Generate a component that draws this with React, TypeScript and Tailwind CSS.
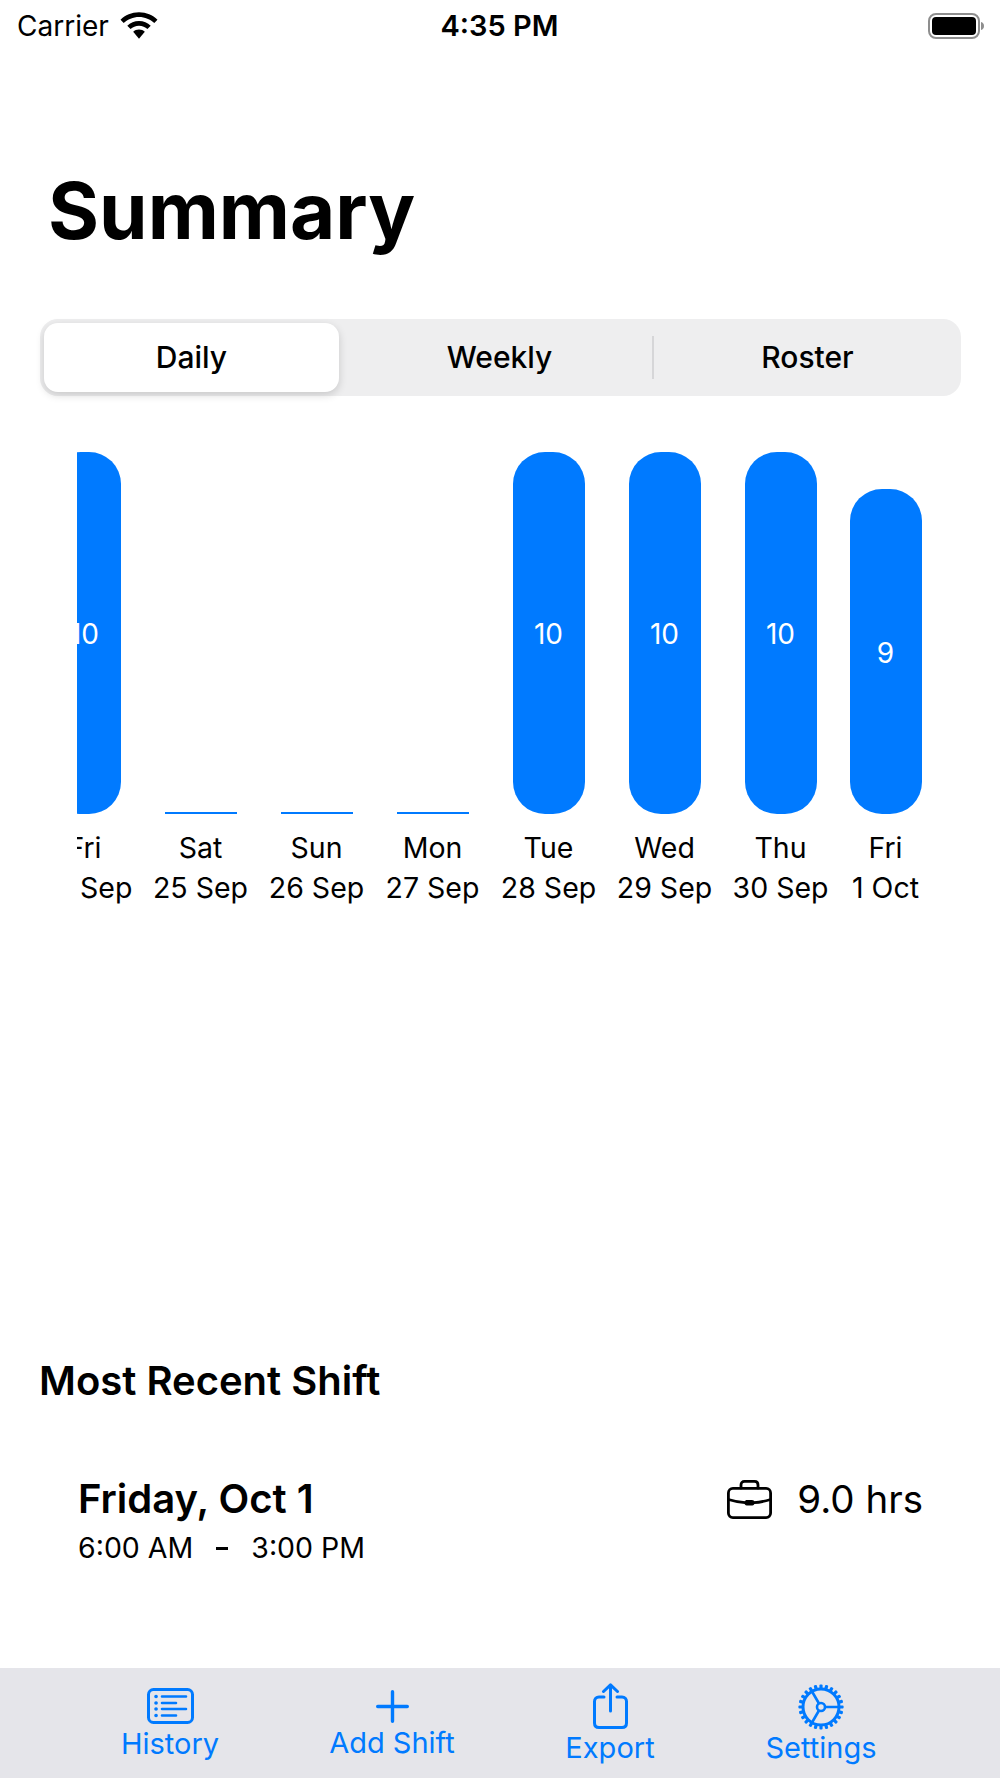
const font = "font-['Inter','Liberation_Sans',sans-serif]";

const days = [
  { day: "Fri", date: "24 Sep", hours: 10 },
  { day: "Sat", date: "25 Sep", hours: 0 },
  { day: "Sun", date: "26 Sep", hours: 0 },
  { day: "Mon", date: "27 Sep", hours: 0 },
  { day: "Tue", date: "28 Sep", hours: 10 },
  { day: "Wed", date: "29 Sep", hours: 10 },
  { day: "Thu", date: "30 Sep", hours: 10 },
  { day: "Fri", date: "1 Oct", hours: 9 },
];

function WifiIcon() {
  return (
    <svg width="38" height="28" viewBox="0 0 36 26" fill="black">
      <path d="M18 0C11 0 5 2.700 0.500 7L3.500 10.200C7.300 6.600 12.400 4.400 18 4.400C23.600 4.400 28.700 6.600 32.500 10.200L35.500 7C31 2.700 25 0 18 0Z" />
      <path d="M18 8.200C13.700 8.200 9.800 9.900 6.900 12.700L10 15.900C12 13.900 14.900 12.700 18 12.700C21.100 12.700 24 13.900 26 15.900L29.100 12.700C26.200 9.900 22.300 8.200 18 8.200Z" />
      <path d="M18 16.300C15.800 16.300 13.900 17.100 12.500 18.500L18 25L23.500 18.500C22.100 17.100 20.200 16.300 18 16.300Z" />
    </svg>
  );
}

function BatteryIcon() {
  return (
    <svg width="56" height="26" viewBox="0 0 56 26">
      <rect x="1" y="1" width="50" height="24" rx="7" fill="none" stroke="#8e8e8e" strokeWidth="2" />
      <rect x="4" y="4" width="44" height="18" rx="4" fill="black" />
      <path d="M53 9C55 9.600 56 11 56 13C56 15 55 16.400 53 17Z" fill="#8e8e8e" />
    </svg>
  );
}

function HistoryIcon() {
  return (
    <svg width="47" height="36" viewBox="0 0 47 36" fill="none" stroke="#007aff" strokeWidth="3" strokeLinecap="round">
      <rect x="1.500" y="1.500" width="44" height="33" rx="5" />
      <path d="M15 8.500H39M15 15H29M15 21H39M15 27.500H29" strokeWidth="2.600" />
      <path d="M9 8.500H9.100M9 15H9.100M9 21H9.100M9 27.500H9.100" strokeWidth="3.600" />
    </svg>
  );
}

function PlusIcon() {
  return (
    <svg width="33" height="33" viewBox="0 0 33 33" fill="none" stroke="#007aff" strokeWidth="3.400" strokeLinecap="round">
      <path d="M16.500 1.700V31.300M1.700 16.500H31.300" />
    </svg>
  );
}

function ShareIcon() {
  return (
    <svg width="35" height="46" viewBox="0 0 35 46" fill="none" stroke="#007aff" strokeWidth="3" strokeLinecap="round" strokeLinejoin="round">
      <path d="M11 14H6C3.200 14 1.500 15.800 1.500 18.600V40C1.500 42.800 3.200 44.500 6 44.500H29C31.800 44.500 33.500 42.800 33.500 40V18.600C33.500 15.800 31.800 14 29 14H24" />
      <path d="M17.500 28V1.800M10.500 8.500L17.500 1.800L24.500 8.500" />
    </svg>
  );
}

function GearIcon() {
  const teeth = Array.from({ length: 24 }, (_, i) => i * 15);
  return (
    <svg width="46" height="46" viewBox="0 0 46 46" fill="none" stroke="#007aff">
      <circle cx="23" cy="23" r="18" strokeWidth="3" />
      {teeth.map((a) => (
        <rect key={a} x="21.400" y="0.400" width="3.200" height="5" rx="1" fill="#007aff" stroke="none" transform={`rotate(${a} 23 23)`} />
      ))}
      <circle cx="23" cy="23" r="4" strokeWidth="2.600" />
      <path d="M27 23H41M21 19.500L14 7.500M21 26.500L14 38.500" strokeWidth="2.600" />
    </svg>
  );
}

function BriefcaseIcon() {
  return (
    <svg width="45" height="39" viewBox="0 0 45 39" fill="none" stroke="black" strokeWidth="2.800" strokeLinecap="round" strokeLinejoin="round">
      <rect x="1.400" y="8.400" width="42.200" height="29.200" rx="4.500" />
      <path d="M14 8V5C14 2.800 15.300 1.400 17.500 1.400H27.500C29.700 1.400 31 2.800 31 5V8" />
      <path d="M1.400 19.500C8 21.500 14 22.500 18 22.700M43.600 19.500C37 21.500 31 22.500 27 22.700" />
      <rect x="18" y="20.500" width="9" height="4.500" rx="1.500" fill="black" strokeWidth="1" />
    </svg>
  );
}

function StatusBar() {
  return (
    <div className="flex h-[50px] items-center pl-[17px] pr-[16px] pt-[2px]">
      <span className="text-[28px] text-black">Carrier</span>
      <span className="ml-[11px]">
        <WifiIcon />
      </span>
      <span className="flex-1 pr-[87px] text-center text-[29px] font-semibold text-black">4:35 PM</span>
      <BatteryIcon />
    </div>
  );
}

function SegmentedControl() {
  return (
    <div className="mx-[40px] mt-[46px] flex h-[77px] w-[921px] items-center rounded-[18px] bg-[#eeeeef] p-[4px] text-[30px] font-medium text-black">
      <div className="flex h-[69px] w-[295px] items-center justify-center rounded-[14px] bg-white shadow-[0_3px_8px_rgba(0,0,0,0.16)]">
        Daily
      </div>
      <div className="flex h-[43px] w-[313px] items-center justify-center pl-[8px]">Weekly</div>
      <div className="h-[43px] w-[2px] bg-[#d6d6d8]" />
      <div className="flex h-[43px] flex-1 items-center justify-center pl-[4px]">Roster</div>
    </div>
  );
}

function Chart() {
  return (
    <div className="ml-[77px] mt-[55px] w-[846px] overflow-hidden">
      <div className="ml-[-40px] flex gap-[21px]">
        {days.map((d, i) => (
          <div key={i} className={`flex shrink-0 flex-col items-center ${i === days.length - 1 ? "w-[73px]" : "w-[95px]"}`}>
            <div className="flex h-[363px] items-end">
              {d.hours === 0 ? (
                <div className="h-[2px] w-[72px] bg-[#007aff]" />
              ) : (
                <div
                  className="flex w-[72px] items-center justify-center rounded-[32px] bg-[#007aff] pt-[2px] text-[28px] text-white"
                  style={{ height: d.hours * 37 - 8 }}
                >
                  {d.hours}
                </div>
              )}
            </div>
            <div className="mt-[14px] whitespace-nowrap text-center text-[28.500px] leading-[40px] text-black">{d.day}</div>
            <div className="whitespace-nowrap text-center text-[28.500px] leading-[40px] text-black">{d.date}</div>
          </div>
        ))}
      </div>
    </div>
  );
}

function RecentShift() {
  return (
    <div className="mt-[449px] pl-[39px]">
      <div className="text-[40px] font-semibold leading-[48px] text-black">Most Recent Shift</div>
      <div className="ml-[39px] mr-[77px] mt-[70px] flex items-center justify-between">
        <div className="text-[40px] font-semibold leading-[48px] text-black">Friday, Oct 1</div>
        <div className="flex items-center gap-[25px] text-[38.500px] leading-[48px] text-black">
          <BriefcaseIcon />
          <span>9.0 hrs</span>
        </div>
      </div>
      <div className="ml-[39px] mt-[7px] flex items-center text-[28.500px] leading-[36px] text-black">
        <span>6:00 AM</span>
        <span className="mx-[23px] h-[3px] w-[12px] bg-black" />
        <span>3:00 PM</span>
      </div>
    </div>
  );
}

function TabBar() {
  return (
    <div className="mt-auto flex h-[110px] bg-[#e5e5ea] pl-[70px] text-[29px] leading-[34px] text-[#007aff]">
      <div className="flex h-[110px] w-[200px] flex-col items-center pt-[20px]">
        <HistoryIcon />
        <span className="mt-[3px]">History</span>
      </div>
      <div className="ml-[22px] flex h-[110px] w-[200px] flex-col items-center pt-[22px]">
        <PlusIcon />
        <span className="mt-[3px]">Add Shift</span>
      </div>
      <div className="ml-[18px] flex h-[110px] w-[200px] flex-col items-center pt-[15px]">
        <ShareIcon />
        <span className="mt-[2px]">Export</span>
      </div>
      <div className="ml-[11px] flex h-[110px] w-[200px] flex-col items-center pt-[16px]">
        <GearIcon />
        <span className="mt-[1px]">Settings</span>
      </div>
    </div>
  );
}

export default function App() {
  return (
    <div className={`flex h-[1778px] w-[1000px] flex-col overflow-hidden bg-white ${font}`}>
      <StatusBar />
      <h1 className="ml-[48px] mt-[99px] text-[78px] font-bold leading-[124px] text-black">Summary</h1>
      <SegmentedControl />
      <Chart />
      <RecentShift />
      <TabBar />
    </div>
  );
}
